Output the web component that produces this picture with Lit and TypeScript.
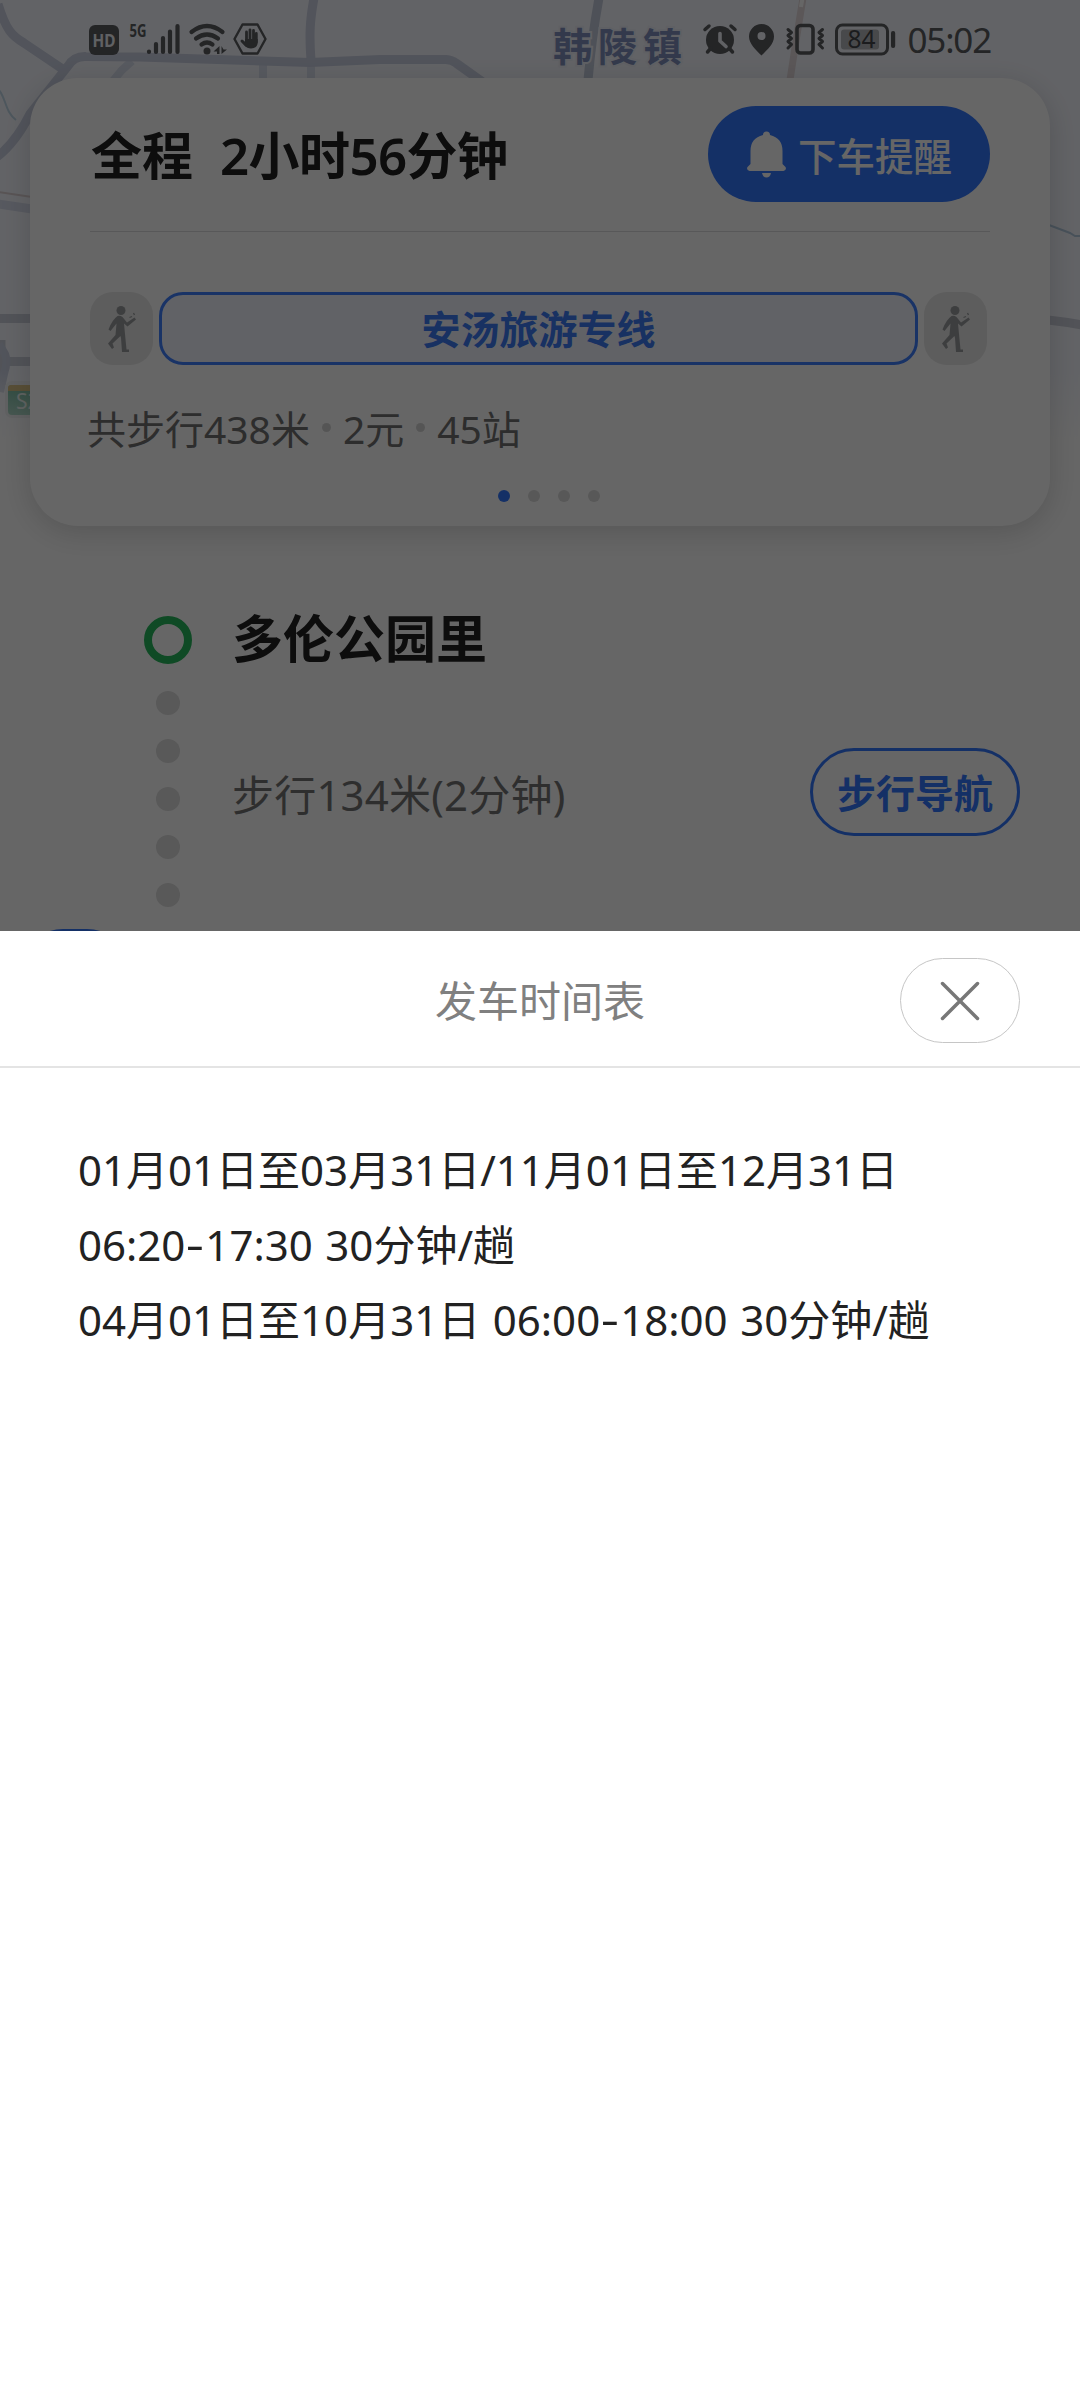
import { LitElement, html, css } from "lit";
import { customElement, property } from "lit/decorators.js";

const FONT = css`"Noto Sans", "Noto Sans CJK SC", sans-serif`;

@customElement("map-backdrop")
class MapBackdrop extends LitElement {
  static styles = css`
    :host { display: block; font-family: ${FONT}; }
    .map { display: block; }
  `;
  render() {
    return html`<svg class="map" width="1080" height="440" viewBox="0 0 1080 440">
      <defs>
        <linearGradient id="fade" x1="0" y1="0" x2="0" y2="1">
          <stop offset="0" stop-color="#fff" stop-opacity="0" />
          <stop offset="1" stop-color="#fff" />
        </linearGradient>
        <linearGradient id="shield" x1="0" y1="0" x2="0" y2="1">
          <stop offset="0" stop-color="#7cc0a6" />
          <stop offset="1" stop-color="#b0d9c9" />
        </linearGradient>
      </defs>
      <rect width="1080" height="440" fill="#f6f8ff" />
      <g fill="none" stroke="#ccd2e4" stroke-width="9">
        <path d="M112 82 122 70 132 61M263 64V80M311 66V80" stroke="#dbe1f0" stroke-width="8" />
        <path d="M-2 4C6 30 12 36 24 43L64 70" />
        <path d="M-3 157Q16 142 30 114L68 66Q74 56 86 56.500L140 57 310 62.500 380 59.500 446 59.500Q452 60 456 63L484 83" />
        <path d="M314-2C310 20 309 34 311 60" />
        <path d="M-2 204 32 209" stroke="#d9deee" />
        <path d="M-2 192 32 197" stroke="#ddd2d4" stroke-width="2" />
        <path d="M0 318.500H32M6 361.500H32M1 340V385" stroke="#ccd0dc" />
        <path d="M-1 344 5 354Q8 362 4 374L0 392" stroke-width="8" />
        <path d="M1048 320Q1066 322 1082 325" stroke="#cdd0dc" />
        <path d="M599-2Q592 36 588 80" stroke="#c3cbdc" />
        <path d="M803-2Q796 40 790 80" stroke="#e3d9dc" stroke-width="7" />
        <path d="M802.500-2 801 7" stroke="#fff" stroke-width="4" />
        <path d="M-1 90C6 98 5 112 16 120" stroke="#c0d8e8" stroke-width="2" />
        <path d="M1049 225 1070 233 1075 236H1082" stroke="#b4cbe0" stroke-width="2" />
      </g>
      <rect y="370" width="1080" height="70" fill="url(#fade)" />
      <g>
        <rect x="5" y="381" width="50" height="37" rx="7" fill="#f0f2f4" />
        <rect x="8" y="385" width="44" height="30" rx="4" fill="url(#shield)" />
        <path d="M8 391V388Q8 385 11 385H50V391Z" fill="#dcc488" />
        <text x="16" y="409" font-size="21" fill="#eef7f3">S2</text>
      </g>
      <text x="553" y="61" font-size="39" font-weight="700" letter-spacing="6"
        fill="#8090bd" stroke="#eef1fa" stroke-width="4" paint-order="stroke">韩陵镇</text>
    </svg>`;
  }
}

@customElement("status-bar")
class StatusBar extends LitElement {
  static styles = css`
    :host {
      display: flex; justify-content: space-between; align-items: center;
      box-sizing: border-box; height: 78px; padding: 0 90px 0 88px;
      font-family: ${FONT}; color: #5a5c60;
    }
    .group { display: flex; align-items: center; }
    .glyphs { display: block; overflow: visible; font-family: ${FONT}; }
    .clock { font-size: 35px; line-height: 40px; padding-top: 2px; margin: 0 -1px 0 11px; letter-spacing: -1.200px; }
  `;
  render() {
    return html`
      <div class="group">
        <svg class="glyphs" width="184" height="34" viewBox="88 22 184 34" fill="#5a5c60">
          <rect x="89" y="25" width="30" height="30" rx="6" />
          <text x="92.500" y="47" font-size="18" font-weight="700" fill="#f0f2f8" textLength="23" lengthAdjust="spacingAndGlyphs">HD</text>
          <text x="129.500" y="37" font-size="18" font-weight="700" textLength="17" lengthAdjust="spacingAndGlyphs">5G</text>
          <g stroke="#5a5c60" stroke-width="4.200" stroke-linecap="round">
            <path d="M149 51.500V52M156 44V52M163 38V52M170 31.500V52M177.500 26V52" />
          </g>
          <g fill="none" stroke="#5a5c60" stroke-width="4.200" stroke-linecap="round">
            <path d="M191.500 32Q207 20 222.500 32M196 38.500Q207 30.500 218 38.500M201.500 44.500Q207 40.500 212.500 44.500" />
          </g>
          <circle cx="207" cy="51" r="3.500" />
          <path d="M219.500 46V54H217V51.500L213.500 51.500ZM221.500 46V54L227 49.500H223.500Z" />
          <path d="M242.500 24.500H257.500L265.500 39 257.500 53.500H242.500L234.500 39Z" fill="none" stroke="#5a5c60" stroke-width="2.400" stroke-linejoin="round" />
          <g fill="none" stroke="#5a5c60" stroke-width="2.800" stroke-linecap="round">
            <path d="M246.500 32V42M250 29.800V42M253.500 30.500V42M256.300 33.500V42M242 41 246.500 45.500" />
          </g>
          <path d="M245 39H257.700V43Q257 48.500 251 48.500 247 48.500 244.500 45.500L241 41.500 242.500 40 245 42Z" />
        </svg>
      </div>
      <div class="group">
        <svg class="glyphs" width="194" height="34" viewBox="702 22 194 34" fill="#5a5c60">
          <circle cx="719" cy="40" r="14" />
          <path d="M704 29.500 708 26M734 29.500 730 26M710 48 706.500 52M728 48 731.500 52" stroke="#5a5c60" stroke-width="3.500" stroke-linecap="round" />
          <path d="M719 33.500V41L725 46.500" fill="none" stroke="#f1f3f9" stroke-width="3.600" stroke-linecap="round" stroke-linejoin="round" />
          <path fill-rule="evenodd" d="M760.500 24A12.500 12.500 0 0 0 748 36.500C748 44 755 50 760.500 55.500 766 50 773 44 773 36.500A12.500 12.500 0 0 0 760.500 24ZM760.500 32A4 4 0 0 1 760.500 40 4 4 0 0 1 760.500 32Z" />
          <rect x="796" y="25.500" width="16" height="27.500" rx="3.500" fill="none" stroke="#5a5c60" stroke-width="3.600" />
          <path d="M787 29.500 790.500 32.500 787 35.500 790.500 38.500 787 41.500 790.500 44.500 787 48M821.500 29.500 818 32.500 821.500 35.500 818 38.500 821.500 41.500 818 44.500 821.500 48" fill="none" stroke="#5a5c60" stroke-width="3" stroke-linecap="round" stroke-linejoin="round" />
          <rect x="835.500" y="25" width="51" height="29" rx="6" fill="none" stroke="#5a5c60" stroke-width="3" />
          <rect x="840" y="29.500" width="38" height="20" rx="3" fill="#b5b7bc" />
          <rect x="890" y="31" width="4.200" height="17" rx="2" />
          <text x="846.500" y="48.300" font-size="25" fill="#45474b" textLength="28" lengthAdjust="spacingAndGlyphs">84</text>
        </svg>
        <span class="clock">05:02</span>
      </div>`;
  }
}

@customElement("walk-chip")
class WalkChip extends LitElement {
  static styles = css`
    :host {
      display: flex; align-items: center; justify-content: center;
      width: 63px; height: 73px; border-radius: 23px; background: #e8e8e8;
    }
  `;
  render() {
    return html`<svg width="30" height="48" viewBox="0 0 30 48" fill="#9a9c9f">
      <circle cx="14" cy="5.500" r="4.500" />
      <path d="M10.500 11Q13 10 15.500 12L20 17.500 27.500 12.500 29 14.500 20.500 21.500 17 18.500 18 29 19.500 44.500H22V47H15L14 33 13.500 31 5.500 38.500 7 42.500 5 44 1 38.500 8.500 30 9.500 18.500 3.500 26 1.500 24.500Q5 15 10.500 11Z" />
      <path d="M22.500 12.500 25 11.500M26.500 8 27.500 10" stroke="#9a9c9f" stroke-width="1.300" />
    </svg>`;
  }
}

@customElement("trip-card")
class TripCard extends LitElement {
  @property({ type: Array }) facts: string[] = ["共步行438米", "2元", "45站"];
  @property({ type: Number }) pages = 4;

  static styles = css`
    :host {
      display: flex; flex-direction: column; box-sizing: border-box;
      height: 448px; margin: 0 30px; padding: 28px 60px 0; border-radius: 48px;
      background: #fff; box-shadow: 0 6px 30px rgba(0, 0, 0, .16);
      font-family: ${FONT};
    }
    .head { display: flex; justify-content: space-between; align-items: center; height: 96px; }
    .title { display: flex; gap: 27px; padding: 2px 0 0 1px; font-size: 51px; font-weight: 600; line-height: 60px; color: #222; white-space: nowrap; }
    .span { letter-spacing: -.600px; }
    .remind {
      display: flex; align-items: center; gap: 12px; box-sizing: border-box;
      width: 282px; height: 96px; padding-left: 39px; border-radius: 48px;
      background: #3478ff; color: #fff; font-size: 38.500px; font-weight: 500; white-space: nowrap;
    }
    .bell { display: block; flex: none; }
    .rule { height: 1px; margin-top: 29px; background: #dcdcdf; }
    .legs { display: flex; gap: 6px; margin-top: 60px; padding-right: 3px; }
    .line {
      flex: 1; box-sizing: border-box; height: 73px; border: 3px solid #3f7fff; border-radius: 24px;
      background: #f2f5ff; color: #3d7af5; text-align: center;
      font-size: 39px; font-weight: 700; line-height: 68px;
    }
    .facts { display: flex; align-items: center; height: 60px; margin-top: 32px; margin-left: -3px; font-size: 39px; color: #707070; white-space: nowrap; }
    .sep { width: 9px; height: 9px; margin: 0 12px 0 12px; border-radius: 50%; background: #d5d5d5; }
    .pager { display: flex; justify-content: center; gap: 18px; margin: 33px 0 0 18px; }
    .dot { width: 12px; height: 12px; border-radius: 50%; background: #dcdcdc; }
    .dot.on { background: #3478ff; }
  `;
  render() {
    return html`
      <div class="head">
        <div class="title"><span>全程</span><span class="span">2小时56分钟</span></div>
        <div class="remind">
          <svg class="bell" width="39" height="47" viewBox="0 0 39 47" fill="#fff">
            <path d="M16 4A3.500 3.500 0 0 1 23 4Q35.500 7 35.500 20V33L38.500 36Q40 39 36.500 40H2.500Q-1 39 .5 36L3.500 33V20Q3.500 7 16 4Z" />
            <path d="M15 42H24Q23 46.500 19.500 46.500 16 46.500 15 42Z" />
          </svg>
          <span>下车提醒</span>
        </div>
      </div>
      <div class="rule"></div>
      <div class="legs"><walk-chip></walk-chip><div class="line">安汤旅游专线</div><walk-chip></walk-chip></div>
      <div class="facts">
        ${this.facts.map((f, i) => html`${i ? html`<i class="sep"></i>` : ""}<span>${f}</span>`)}
      </div>
      <div class="pager">
        ${Array.from({ length: this.pages }, (_, i) => html`<i class="dot ${i === 0 ? "on" : ""}"></i>`)}
      </div>`;
  }
}

@customElement("route-steps")
class RouteSteps extends LitElement {
  static styles = css`
    :host { display: flex; padding: 90px 60px 0 48px; font-family: ${FONT}; }
    .track { display: flex; flex-direction: column; align-items: center; width: 240px; flex: none; }
    .start { box-sizing: border-box; width: 48px; height: 48px; border: 8px solid #27b85c; border-radius: 50%; }
    .dots { display: flex; flex-direction: column; gap: 24px; margin-top: 27px; }
    .dot { width: 24px; height: 24px; border-radius: 50%; background: #dedede; }
    .bus { width: 114px; height: 90px; margin: 22px 186px 0 0; flex: none; border-radius: 50px; background: #3478ff; }
    .info { flex: 1; margin-left: -56px; }
    .place { font-size: 51px; font-weight: 600; line-height: 60px; margin-top: -8px; color: #222; }
    .walk { display: flex; align-items: center; justify-content: space-between; height: 88px; margin-top: 80px; font-size: 42px; letter-spacing: .200px; color: #747474; white-space: nowrap; }
    .nav {
      box-sizing: border-box; width: 210px; height: 88px; border: 3px solid #3478ff; border-radius: 44px;
      color: #3478ff; font-size: 39px; letter-spacing: 0; font-weight: 700; line-height: 84px; text-align: center;
    }
  `;
  render() {
    return html`
      <div class="track">
        <i class="start"></i>
        <div class="dots">${[0, 1, 2, 3, 4].map(() => html`<i class="dot"></i>`)}</div>
        <i class="bus"></i>
      </div>
      <div class="info">
        <div class="place">多伦公园里</div>
        <div class="walk"><span>步行134米(2分钟)</span><div class="nav">步行导航</div></div>
      </div>`;
  }
}

@customElement("timetable-sheet")
class TimetableSheet extends LitElement {
  @property({ type: Array }) lines: string[] = [
    "01月01日至03月31日/11月01日至12月31日",
    "06:20-17:30 30分钟/趟",
    "04月01日至10月31日 06:00-18:00 30分钟/趟",
  ];
  static styles = css`
    :host { display: block; background: #fff; font-family: ${FONT}; }
    .head {
      display: grid; grid-template-columns: 1fr auto 1fr; align-items: center;
      box-sizing: border-box; height: 137px; padding: 0 60px; border-bottom: 2px solid #e4e4e4;
    }
    .title { grid-column: 2; font-size: 42px; color: #808080; }
    .close {
      display: flex; align-items: center; justify-content: center; justify-self: end;
      box-sizing: border-box; width: 120px; height: 85px; margin-top: 4px; border: 1.500px solid #c6c6c6; border-radius: 43px;
    }
    .body { padding: 64px 78px; font-size: 42px; line-height: 75px; word-spacing: 1.700px; color: #222; white-space: nowrap; }
    .row { height: 75px; }
    .dash { display: inline-block; width: 20px; text-align: center; transform: translateY(-1px) scaleX(1.350); }
  `;

  private row(line: string) {
    return line.split("-").map((part, i) => html`${i ? html`<span class="dash">-</span>` : ""}${part}`);
  }

  render() {
    return html`
      <div class="head">
        <span class="title">发车时间表</span>
        <div class="close">
          <svg width="40" height="40" viewBox="0 0 40 40"><path d="M2.500 2.500 37.500 37.500M37.500 2.500 2.500 37.500" stroke="#777" stroke-width="3.500" stroke-linecap="round" /></svg>
        </div>
      </div>
      <div class="body">${this.lines.map((l) => html`<div class="row">${this.row(l)}</div>`)}</div>`;
  }
}

@customElement("app-root")
class AppRoot extends LitElement {
  static styles = css`
    :host { display: block; width: 1080px; height: 2400px; }
    .screen { display: flex; flex-direction: column; width: 1080px; height: 2400px; overflow: hidden; background: #fff; }
    .trip { position: relative; height: 931px; flex: none; overflow: hidden; background: #fff; }
    .map { position: absolute; inset: 0 0 auto 0; }
    .front { position: relative; }
    .scrim { position: absolute; inset: 0; background: rgba(0, 0, 0, .6); }
    .sheet { flex: 1; }
  `;
  render() {
    return html`<div class="screen">
      <div class="trip">
        <map-backdrop class="map"></map-backdrop>
        <div class="front">
          <status-bar></status-bar>
          <trip-card></trip-card>
          <route-steps></route-steps>
        </div>
        <div class="scrim"></div>
      </div>
      <timetable-sheet class="sheet"></timetable-sheet>
    </div>`;
  }
}
